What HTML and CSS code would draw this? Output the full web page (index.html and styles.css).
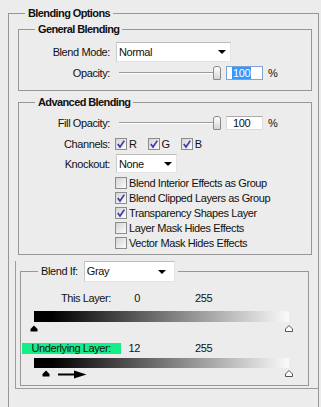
FILE: index.html
```html
<!DOCTYPE html>
<html lang="en">
<head>
    <meta charset="UTF-8">
    <meta name="viewport" content="width=device-width, initial-scale=1.0">
    <title>Blending Options</title>
    <link rel="stylesheet" href="styles.css">
</head>
<body>
    <fieldset class="group outer">
        <legend>Blending Options</legend>

        <fieldset class="group general">
            <legend>General Blending</legend>
            <div class="row">
                <label>Blend Mode:</label>
                <div class="select mode">Normal</div>
            </div>
            <div class="row gap4">
                <label>Opacity:</label>
                <div class="amount">
                    <div class="slider"><span class="track"></span><span class="knob"></span></div>
                    <div class="num focus"><span class="sel">100</span></div>
                    <span class="pct">%</span>
                </div>
            </div>
        </fieldset>

        <fieldset class="group advanced">
            <legend>Advanced Blending</legend>
            <div class="row">
                <label>Fill Opacity:</label>
                <div class="amount">
                    <div class="slider"><span class="track"></span><span class="knob"></span></div>
                    <div class="num">100</div>
                    <span class="pct">%</span>
                </div>
            </div>
            <div class="row channels-row">
                <label>Channels:</label>
                <div class="channels">
                    <span class="check"><span class="box on"><svg viewBox="0 0 10 10"><path d="M1.8 5 L4 8 L8.3 1.6"/></svg></span>R</span>
                    <span class="check"><span class="box on"><svg viewBox="0 0 10 10"><path d="M1.8 5 L4 8 L8.3 1.6"/></svg></span>G</span>
                    <span class="check"><span class="box on"><svg viewBox="0 0 10 10"><path d="M1.8 5 L4 8 L8.3 1.6"/></svg></span>B</span>
                </div>
            </div>
            <div class="row knock-row">
                <label>Knockout:</label>
                <div class="select knock">None</div>
            </div>
            <div class="checks">
                <span class="check"><span class="box"></span>Blend Interior Effects as Group</span>
                <span class="check"><span class="box on"><svg viewBox="0 0 10 10"><path d="M1.8 5 L4 8 L8.3 1.6"/></svg></span>Blend Clipped Layers as Group</span>
                <span class="check"><span class="box on"><svg viewBox="0 0 10 10"><path d="M1.8 5 L4 8 L8.3 1.6"/></svg></span>Transparency Shapes Layer</span>
                <span class="check"><span class="box"></span>Layer Mask Hides Effects</span>
                <span class="check"><span class="box"></span>Vector Mask Hides Effects</span>
            </div>
        </fieldset>

        <div class="pane">
            <fieldset class="group blendif">
                <legend><span>Blend If:</span><div class="select gray">Gray</div></legend>

                <div class="layer first">
                    <span class="name">This Layer:</span>
                    <span class="val">0</span>
                    <span class="max">255</span>
                </div>
                <div class="bar"></div>
                <div class="thumbs">
                    <svg class="thumb" style="left:-4px" viewBox="0 0 8 7"><path d="M0.5 6.5 V4 L4 0.5 L7.5 4 V6.5 Z" fill="#000"/></svg>
                    <svg class="thumb" style="left:251px" viewBox="0 0 8 7"><path d="M0.5 6.5 V4 L4 0.5 L7.5 4 V6.5 Z" fill="#fff" stroke="#555"/></svg>
                </div>

                <div class="layer second">
                    <span class="name hl">Underlying Layer:</span>
                    <span class="val">12</span>
                    <span class="max">255</span>
                </div>
                <div class="bar low"></div>
                <div class="thumbs low">
                    <svg class="thumb" style="left:8px" viewBox="0 0 8 7"><path d="M0.5 6.5 V4 L4 0.5 L7.5 4 V6.5 Z" fill="#000"/></svg>
                    <svg class="arrow" viewBox="0 0 29 9"><path d="M0 4.5 H18" stroke="#000" stroke-width="2"/><path d="M16 0.5 L28.5 4.5 L16 8.5 Z" fill="#000"/></svg>
                    <svg class="thumb" style="left:251px" viewBox="0 0 8 7"><path d="M0.5 6.5 V4 L4 0.5 L7.5 4 V6.5 Z" fill="#fff" stroke="#555"/></svg>
                </div>
            </fieldset>
        </div>
    </fieldset>
</body>
</html>
```

FILE: styles.css
```css
html, body {
    margin: 0;
    overflow: hidden;
}
body {
    background-color: #ececec;
    font-family: "Liberation Sans", Arial, sans-serif;
    font-size: 11px;
    color: #111;
    letter-spacing: -0.4px;
    width: 321px;
    height: 407px;
    padding-top: 6px;
    box-sizing: border-box;
}
.group {
    border: 1px solid #979797;
    margin: 0;
    padding: 0;
    min-width: 0;
}
.group > legend {
    font-weight: bold;
    letter-spacing: -0.6px;
    line-height: 14px;
    padding: 0 3px;
    margin-left: 16px;
}
.outer {
    margin-left: 8px;
    width: 311px;
    box-sizing: border-box;
    padding: 0 6px 40px 9px;
}
.outer > legend {
    margin-left: 7px;
}
.general {
    margin-top: 2px;
    padding: 6px 0 10px;
}
.advanced {
    margin-top: 4px;
    padding: 7px 0 4px;
}
.row {
    display: grid;
    grid-template-columns: 91px auto;
    column-gap: 6px;
    align-items: center;
}
.row label {
    text-align: right;
}
.gap4 {
    margin-top: 4px;
}
.select {
    height: 20px;
    box-sizing: border-box;
    background: #fff;
    border: 1px solid #e4e4e4;
    border-top-color: #bcbcbc;
    border-left-color: #cacaca;
    padding: 0 4px 0 2px;
    display: flex;
    align-items: center;
    justify-content: space-between;
    font-weight: normal;
    letter-spacing: -0.4px;
}
.select::after {
    content: "";
    border-left: 4px solid transparent;
    border-right: 4px solid transparent;
    border-top: 4px solid #000;
}
.mode {
    width: 115px;
}
.knock {
    width: 61px;
    height: 19px;
}
.gray {
    width: 91px;
    height: 21px;
    padding-right: 8px;
}
.amount {
    display: flex;
    align-items: center;
    height: 14px;
}
.slider {
    width: 105px;
    display: flex;
    align-items: center;
}
.track {
    flex: 1;
    height: 1px;
    margin-left: 3px;
    margin-right: -2px;
    background: #9a9a9a;
    border-bottom: 1px solid #fff;
}
.knob {
    width: 6px;
    height: 12px;
    border: 1px solid #8a8a8a;
    border-radius: 3px 3px 1px 1px;
    background: linear-gradient(#ffffff, #d4d4d4);
}
.num {
    width: 37px;
    height: 14px;
    margin-left: 5px;
    box-sizing: border-box;
    background: #fff;
    border: 1px solid #dcdcdc;
    border-top-color: #ababab;
    padding-left: 6px;
    line-height: 12px;
}
.num.focus {
    border-color: #7fa2d6;
    padding-left: 5px;
}
.sel {
    background: #3399ff;
    color: #fff;
    padding: 0 1px;
}
.pct {
    margin-left: 5px;
}
.channels-row {
    margin-top: 6px;
    height: 13px;
}
.channels {
    display: flex;
    gap: 11px;
    margin-left: -1px;
}
.check {
    display: flex;
    align-items: center;
    gap: 2px;
    height: 15px;
}
.box {
    width: 12px;
    height: 12px;
    box-sizing: border-box;
    border: 1px solid #8c8c8c;
    background: linear-gradient(135deg, #d4d4d4, #fbfbfb);
    display: flex;
}
.box svg {
    width: 10px;
    height: 10px;
}
.box path {
    fill: none;
    stroke: #3b3bab;
    stroke-width: 1.7;
}
.knock-row {
    margin-top: 5px;
}
.checks {
    margin-top: 2px;
    padding-left: 96px;
    display: flex;
    flex-direction: column;
}
.pane {
    margin: 11px -6px 0 -3px;
    border-left: 1px solid #9c9c9c;
    border-bottom: 1px solid #9c9c9c;
    padding: 0 9px 2px 4px;
}
.blendif {
    margin-top: -5px;
    padding-bottom: 7px;
}
.blendif > legend {
    display: flex;
    align-items: center;
    gap: 6px;
    margin-left: 17px;
    font-weight: normal;
    letter-spacing: -0.4px;
    line-height: 21px;
}
.layer {
    display: flex;
    margin-top: 10px;
    line-height: 13px;
}
.layer.second {
    line-height: 11px;
}
.name {
    width: 99px;
    margin-left: 1px;
    box-sizing: border-box;
    padding-right: 10px;
    text-align: right;
}
.hl {
    background: #14ee88;
}
.val {
    width: 19px;
    text-align: right;
}
.max {
    margin-left: 55px;
}
.bar {
    width: 255px;
    height: 11px;
    margin: 6px 0 0 13px;
    background: linear-gradient(to right, #000 0%, #000 7%, #fafafa 100%);
}
.bar.low {
    height: 10px;
    margin-top: 4px;
}
.thumbs {
    position: relative;
    width: 255px;
    height: 8px;
    margin: 3px 0 0 13px;
}
.thumbs.low {
    margin-top: 2px;
}
.thumb {
    position: absolute;
    top: 0;
    width: 8px;
    height: 7px;
}
.arrow {
    position: absolute;
    left: 24px;
    top: 0;
    width: 29px;
    height: 9px;
}
```
